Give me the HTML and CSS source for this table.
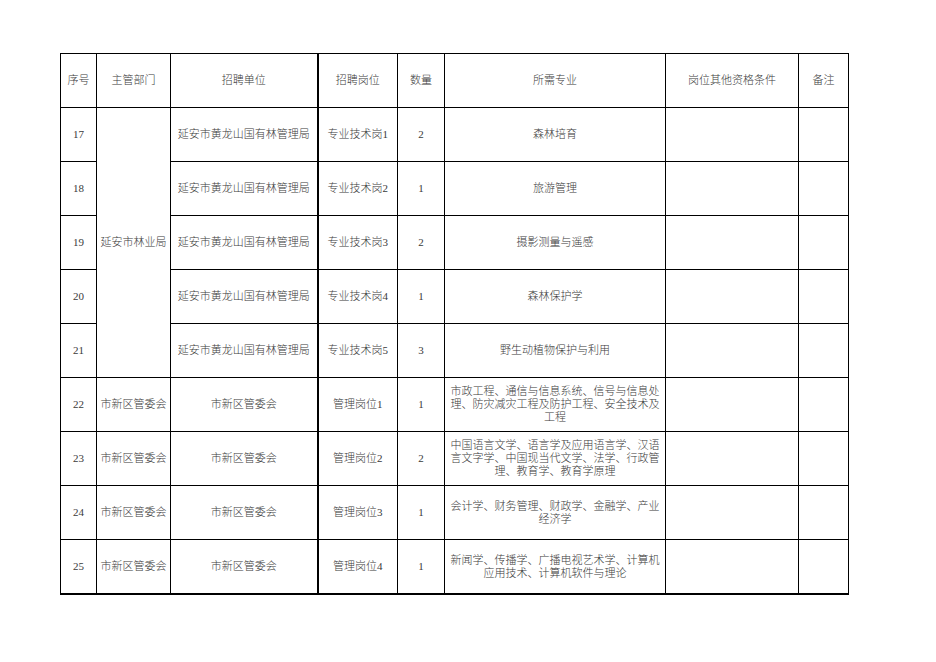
FILE: index.html
```html
<!DOCTYPE html>
<html lang="zh-CN">
<head>
<meta charset="utf-8">
<title>招聘岗位表</title>
<link rel="stylesheet" href="styles.css">
</head>
<body>
<table class="sheet">
  <colgroup>
    <col class="c1"><col class="c2"><col class="c3"><col class="c4"><col class="c5"><col class="c6"><col class="c7"><col class="c8">
  </colgroup>
  <tr>
    <td>序号</td><td>主管部门</td><td>招聘单位</td><td class="thick">招聘岗位</td><td>数量</td><td>所需专业</td><td>岗位其他资格条件</td><td>备注</td>
  </tr>
  <tr>
    <td>17</td><td rowspan="5">延安市林业局</td><td>延安市黄龙山国有林管理局</td><td class="thick">专业技术岗1</td><td>2</td><td>森林培育</td><td></td><td></td>
  </tr>
  <tr>
    <td>18</td><td>延安市黄龙山国有林管理局</td><td class="thick">专业技术岗2</td><td>1</td><td>旅游管理</td><td></td><td></td>
  </tr>
  <tr>
    <td>19</td><td>延安市黄龙山国有林管理局</td><td class="thick">专业技术岗3</td><td>2</td><td>摄影测量与遥感</td><td></td><td></td>
  </tr>
  <tr>
    <td>20</td><td>延安市黄龙山国有林管理局</td><td class="thick">专业技术岗4</td><td>1</td><td>森林保护学</td><td></td><td></td>
  </tr>
  <tr>
    <td>21</td><td>延安市黄龙山国有林管理局</td><td class="thick">专业技术岗5</td><td>3</td><td>野生动植物保护与利用</td><td></td><td></td>
  </tr>
  <tr>
    <td>22</td><td>市新区管委会</td><td>市新区管委会</td><td class="thick">管理岗位1</td><td>1</td><td class="major">市政工程、通信与信息系统、信号与信息处<br>理、防灾减灾工程及防护工程、安全技术及<br>工程</td><td></td><td></td>
  </tr>
  <tr>
    <td>23</td><td>市新区管委会</td><td>市新区管委会</td><td class="thick">管理岗位2</td><td>2</td><td class="major">中国语言文学、语言学及应用语言学、汉语<br>言文字学、中国现当代文学、法学、行政管<br>理、教育学、教育学原理</td><td></td><td></td>
  </tr>
  <tr>
    <td>24</td><td>市新区管委会</td><td>市新区管委会</td><td class="thick">管理岗位3</td><td>1</td><td class="major">会计学、财务管理、财政学、金融学、产业<br>经济学</td><td></td><td></td>
  </tr>
  <tr class="last">
    <td>25</td><td>市新区管委会</td><td>市新区管委会</td><td class="thick">管理岗位4</td><td>1</td><td class="major">新闻学、传播学、广播电视艺术学、计算机<br>应用技术、计算机软件与理论</td><td></td><td></td>
  </tr>
</table>
</body>
</html>
```

FILE: styles.css
```css
html, body {
  margin: 0;
  padding: 0;
  background: #ffffff;
}
body {
  padding: 53px 0 0 60px;
}
.sheet {
  border-collapse: collapse;
  table-layout: fixed;
  width: 788px;
  font-family: "Liberation Serif", "Noto Sans CJK SC", serif;
  font-size: 11px;
  font-weight: 300;
  line-height: 13px;
  color: #3a3a3a;
}
.c1 { width: 36px; }
.c2 { width: 74px; }
.c3 { width: 147px; }
.c4 { width: 80px; }
.c5 { width: 47px; }
.c6 { width: 221px; }
.c7 { width: 133px; }
.c8 { width: 50px; }
.sheet td {
  border: 1px solid #000000;
  height: 53px;
  padding: 0 2px;
  text-align: center;
  vertical-align: middle;
  white-space: nowrap;
  overflow: hidden;
}
.sheet td.thick {
  border-left: 2px solid #000000;
}
.sheet tr.last td {
  border-bottom: 2px solid #000000;
}
.sheet td.major {
  padding: 0 1px;
}
```
